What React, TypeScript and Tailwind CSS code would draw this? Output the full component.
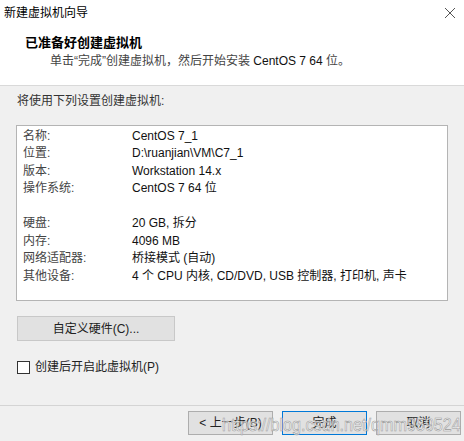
import React from 'react'

const font = { fontFamily: '"Liberation Sans", "Noto Sans CJK SC", sans-serif' }

const rows: [string, string][] = [
  ['名称:', 'CentOS 7_1'],
  ['位置:', 'D:\\ruanjian\\VM\\C7_1'],
  ['版本:', 'Workstation 14.x'],
  ['操作系统:', 'CentOS 7 64 位'],
  ['', ''],
  ['硬盘:', '20 GB, 拆分'],
  ['内存:', '4096 MB'],
  ['网络适配器:', '桥接模式 (自动)'],
  ['其他设备:', '4 个 CPU 内核, CD/DVD, USB 控制器, 打印机, 声卡'],
]

function DlgButton({ label, primary }: { label: string; primary?: boolean }) {
  return (
    <button
      className={
        primary
          ? 'w-[85px] h-[24px] bg-[#e1e1e1] border border-[#0078d7] text-[12px] text-[#222]'
          : 'w-[85px] h-[24px] bg-[#e1e1e1] border border-[#adadad] text-[12px] text-[#222]'
      }
    >
      {label}
    </button>
  )
}

export default function App() {
  return (
    <div className="relative w-[464px] h-[441px] bg-[#f0f0f0] flex flex-col text-[12px] text-[#1a1a1a] overflow-hidden" style={font}>
      <div className="bg-white h-[86px] border-b border-[#d9d9d9] flex flex-col">
        <div className="h-[25px] flex items-center justify-between pl-[4px] pr-[6px]">
          <span className="text-[12px] text-black">新建虚拟机向导</span>
          <svg width="12" height="12" viewBox="0 0 12 12" className="mr-[2px]">
            <path d="M1 1 L11 11 M11 1 L1 11" stroke="#555" strokeWidth="1" />
          </svg>
        </div>
        <div className="pl-[25px] mt-[10px] text-[13px] font-bold text-black leading-[15px]">已准备好创建虚拟机</div>
        <div className="pl-[50px] mt-[4px] text-[12px] text-[#444] leading-[15px]">
          单击“完成”创建虚拟机，然后开始安装 <span className="text-[#111]">CentOS 7 64</span> 位。
        </div>
      </div>

      <div className="pl-[17px] mt-[8px] leading-[15px] text-[#333]">将使用下列设置创建虚拟机:</div>

      <div className="mx-[16px] mt-[16px] h-[176px] bg-white border border-[#b4b4b4] pt-[1px] pl-[6px]">
        {rows.map(([k, v], i) => (
          <div key={i} className="flex h-[17.5px] items-center">
            <span className="w-[109px] text-[#444]">{k}</span>
            <span className="text-[#111]">{v}</span>
          </div>
        ))}
      </div>

      <button className="ml-[17px] mt-[15px] w-[158px] h-[25px] bg-[#e1e1e1] border border-[#c8c8c8] text-[12px] text-[#222]">
        自定义硬件(C)...
      </button>

      <label className="ml-[17px] mt-[17px] flex items-center gap-[5px]">
        <span className="w-[13px] h-[13px] border border-[#333] bg-white" />
        <span className="text-[#222]">创建后开启此虚拟机(P)</span>
      </label>

      <div className="mt-auto border-t border-[#d4d4d4] h-[36px] flex items-center justify-end gap-[9px] pr-[3px] pb-[1px]">
        <DlgButton label="< 上一步(B)" />
        <DlgButton label="完成" primary />
        <DlgButton label="取消" />
      </div>

      <div
        className="absolute left-[222px] top-[413px] text-[19px] leading-[24px] text-white/70 [-webkit-text-stroke:0.6px_#9a9a9a] pointer-events-none origin-left scale-x-[0.85] whitespace-nowrap"
        style={{ fontFamily: '"Liberation Sans", sans-serif' }}
      >
        https://blog.csdn.net/qmm959524
      </div>
    </div>
  )
}
